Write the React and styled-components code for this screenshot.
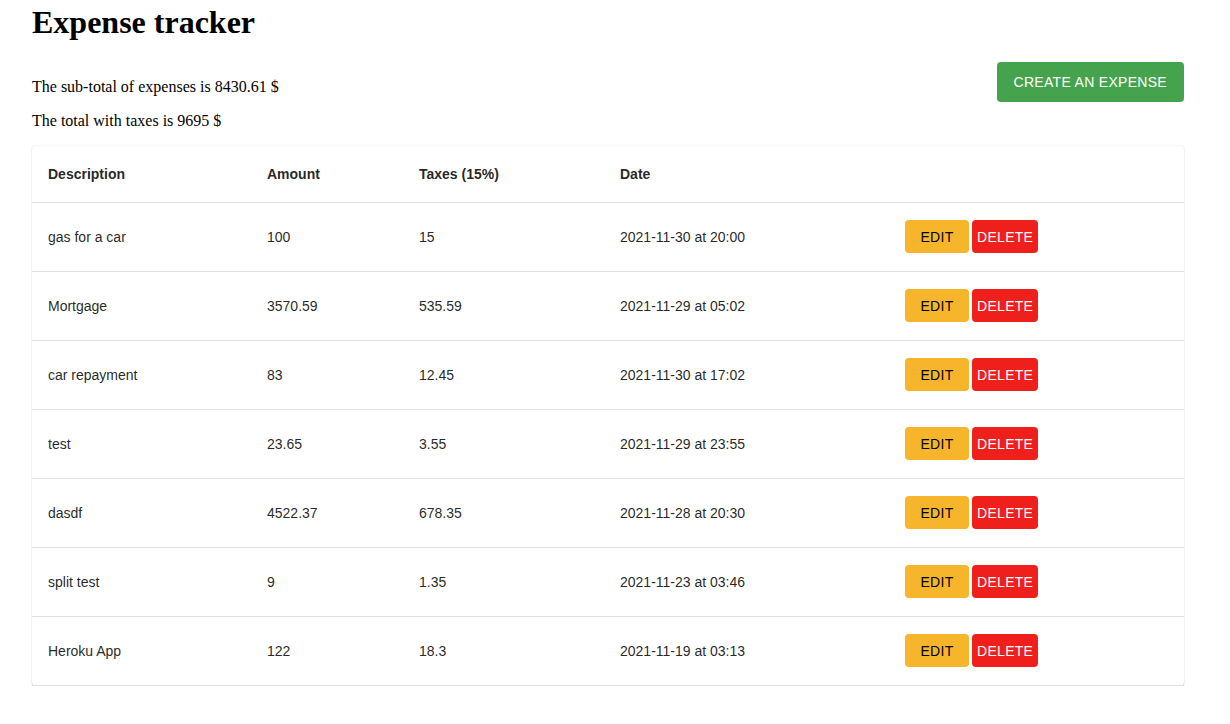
import React from 'react';
import styled, { createGlobalStyle } from 'styled-components';

const expenses = [
  { description: 'gas for a car', amount: '100', taxes: '15', date: '2021-11-30 at 20:00' },
  { description: 'Mortgage', amount: '3570.59', taxes: '535.59', date: '2021-11-29 at 05:02' },
  { description: 'car repayment', amount: '83', taxes: '12.45', date: '2021-11-30 at 17:02' },
  { description: 'test', amount: '23.65', taxes: '3.55', date: '2021-11-29 at 23:55' },
  { description: 'dasdf', amount: '4522.37', taxes: '678.35', date: '2021-11-28 at 20:30' },
  { description: 'split test', amount: '9', taxes: '1.35', date: '2021-11-23 at 03:46' },
  { description: 'Heroku App', amount: '122', taxes: '18.3', date: '2021-11-19 at 03:13' },
];

const App = () => {
  return (
    <Page>
      <GlobalStyle />
      <Title>Expense tracker</Title>
      <SummaryRow>
        <Totals>
          <Line>The sub-total of expenses is 8430.61 $</Line>
          <Line>The total with taxes is 9695 $</Line>
        </Totals>
        <CreateButton>Create an expense</CreateButton>
      </SummaryRow>
      <Paper>
        <Table>
          <colgroup>
            <col style={{ width: 219 }} />
            <col style={{ width: 152 }} />
            <col style={{ width: 201 }} />
            <col style={{ width: 285 }} />
            <col />
          </colgroup>
          <thead>
            <tr>
              <HeadCell>Description</HeadCell>
              <HeadCell>Amount</HeadCell>
              <HeadCell>Taxes (15%)</HeadCell>
              <HeadCell>Date</HeadCell>
              <HeadCell />
            </tr>
          </thead>
          <tbody>
            {expenses.map((e, i) => (
              <Row key={i}>
                <Cell>{e.description}</Cell>
                <Cell>{e.amount}</Cell>
                <Cell>{e.taxes}</Cell>
                <Cell>{e.date}</Cell>
                <Cell>
                  <Actions>
                    <ActionButton $kind="edit">Edit</ActionButton>
                    <ActionButton $kind="delete">Delete</ActionButton>
                  </Actions>
                </Cell>
              </Row>
            ))}
          </tbody>
        </Table>
      </Paper>
    </Page>
  );
};

const GlobalStyle = createGlobalStyle`
  body {
    margin: 0;
    background: #fff;
    font-family: 'Liberation Serif', 'Times New Roman', serif;
  }
`;

const Page = styled.div`
  width: 1152px;
  margin-left: 32px;
  padding-top: 4px;
`;

const Title = styled.h1`
  font-size: 32px;
  font-weight: bold;
  margin: 0 0 21px;
  color: #000;
`;

const SummaryRow = styled.div`
  display: flex;
  justify-content: space-between;
  align-items: flex-start;
`;

const Totals = styled.div`
  display: flow-root;
`;

const Line = styled.p`
  font-size: 16px;
  margin: 16px 0;
  color: #000;
`;

const CreateButton = styled.button`
  height: 40px;
  padding: 0 17px;
  border: none;
  border-radius: 4px;
  background: #45a34d;
  color: #fff;
  font-family: 'Liberation Sans', Arial, sans-serif;
  font-size: 14px;
  font-weight: 500;
  letter-spacing: 0.3px;
  text-transform: uppercase;
  cursor: pointer;
`;

const Paper = styled.div`
  background: #fff;
  border-radius: 4px;
  box-shadow: 0 1px 1px 0 rgba(0,0,0,0.3), 0 0 2px 0 rgba(0,0,0,0.1);
  overflow: hidden;
`;

const Table = styled.table`
  width: 100%;
  border-collapse: collapse;
  table-layout: fixed;
  font-family: 'Liberation Sans', Arial, sans-serif;
  font-size: 14px;
  color: rgba(0,0,0,0.87);
`;

const HeadCell = styled.th`
  height: 56px;
  padding: 0 16px;
  text-align: left;
  font-weight: bold;
  border-bottom: 1px solid #e0e0e0;
  box-sizing: border-box;
`;

const Row = styled.tr`
  height: 69px;
  border-bottom: 1px solid #e0e0e0;
`;

const Cell = styled.td`
  padding: 0 16px;
  vertical-align: middle;
`;

const Actions = styled.div`
  display: flex;
  gap: 3px;
`;

const ActionButton = styled.button`
  height: 33px;
  min-width: 64px;
  padding: 0 5px;
  border: none;
  border-radius: 4px;
  font-family: 'Liberation Sans', Arial, sans-serif;
  font-size: 14px;
  text-transform: uppercase;
  letter-spacing: 0.3px;
  background: ${(p) => (p.$kind === 'edit' ? '#f7b52c' : '#ef1f1c')};
  color: ${(p) => (p.$kind === 'edit' ? '#000' : '#fff')};
  cursor: pointer;
`;

export default App;
